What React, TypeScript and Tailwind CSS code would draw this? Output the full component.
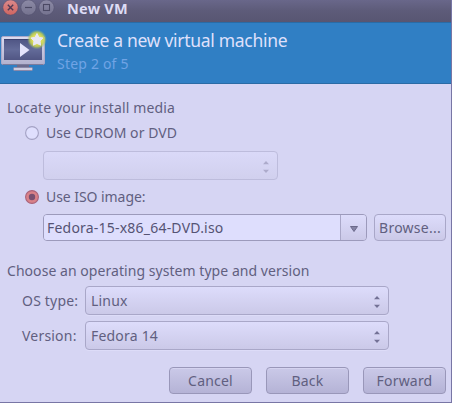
import React from "react";

function Monitor() {
  return (
    <svg width="50" height="46" viewBox="0 0 50 46" className="block shrink-0">
      <defs>
        <radialGradient id="glow">
          <stop offset="0.45" stopColor="#e0e05a" />
          <stop offset="0.72" stopColor="#c3d052" stopOpacity="0.85" />
          <stop offset="1" stopColor="#7fae80" stopOpacity="0" />
        </radialGradient>
        <linearGradient id="screen" x1="0" y1="0" x2="0" y2="1">
          <stop offset="0" stopColor="#4f5584" />
          <stop offset="0.5" stopColor="#636b99" />
          <stop offset="1" stopColor="#515684" />
        </linearGradient>
        <linearGradient id="frame" x1="0" y1="0" x2="0" y2="1">
          <stop offset="0" stopColor="#dcdcf0" />
          <stop offset="1" stopColor="#b2b1ce" />
        </linearGradient>
      </defs>
      <path d="M17 36h12v4H17z" fill="#6c6b8c" />
      <rect x="13.5" y="39.5" width="19" height="3" rx="1" fill="#cdccdf" stroke="#8988a9" />
      <rect x="1.5" y="8.500" width="43" height="28" rx="1.5" fill="url(#frame)" stroke="#aaa9ca" />
      <path d="M2.500 36.500h41" stroke="#7c7b9c" />
      <rect x="4" y="11" width="38" height="21" fill="url(#screen)" />
      <path d="M4 11.500h38" stroke="#3c4270" />
      <path d="M20 15v14l9.500-7z" fill="#e4e3fb" />
      <circle cx="37" cy="11.500" r="10" fill="url(#glow)" />
      <path d="M37 5.500l1.900 3.800 4.100.7-3 3 .6 4.200-3.600-1.900-3.600 1.900.6-4.200-3-3 4.100-.7z" fill="#e9e8f4" stroke="#e9e8f4" strokeLinejoin="round" />
    </svg>
  );
}

function TitleBar() {
  return (
    <div className="flex h-[22px] shrink-0 items-start bg-linear-to-b from-[#69678a] via-[#5d5b79] to-[#585672]">
      <svg width="60" height="17" viewBox="0 0 60 17" className="block shrink-0">
        <defs>
          <linearGradient id="close" x1="0" y1="0" x2="0" y2="1">
            <stop offset="0" stopColor="#dc8a8c" />
            <stop offset="1" stopColor="#cf6560" />
          </linearGradient>
          <linearGradient id="plain" x1="0" y1="0" x2="0" y2="1">
            <stop offset="0" stopColor="#8c8aa6" />
            <stop offset="1" stopColor="#75738f" />
          </linearGradient>
        </defs>
        <circle cx="10.500" cy="7.500" r="7.600" fill="url(#close)" stroke="#5a4a68" strokeWidth="0.500" />
        <circle cx="28.500" cy="7.500" r="7.600" fill="url(#plain)" stroke="#514f6c" strokeWidth="0.500" />
        <circle cx="46.500" cy="7.500" r="7.600" fill="url(#plain)" stroke="#514f6c" strokeWidth="0.500" />
        <path d="M7.800 4.800l5.400 5.400M13.200 4.800l-5.400 5.400" stroke="#513b55" strokeWidth="1.400" />
        <path d="M25 7.500h7" stroke="#4b4964" strokeWidth="1.200" />
        <rect x="43.500" y="4.500" width="6" height="6" fill="none" stroke="#4b4964" strokeWidth="1.100" />
      </svg>
      <div className="ml-[7px] h-4 text-[14.500px] leading-4 font-bold tracking-[0.250px] text-[#dedcf5]">New VM</div>
    </div>
  );
}

function Radio({ on }: { on?: boolean }) {
  return (
    <svg width="14" height="14" viewBox="0 0 14 14" className="block shrink-0">
      <circle cx="7" cy="7" r="6.400" fill={on ? "#d98188" : "#dfdffd"} stroke={on ? "#a96279" : "#a3a1c3"} strokeWidth="1.100" />
      {on && <circle cx="7" cy="7" r="3.200" fill="#785070" />}
    </svg>
  );
}

function Arrows({ faint }: { faint?: boolean }) {
  return (
    <svg width="6" height="12" viewBox="0 0 6 12" className={faint ? "mt-0.5 block text-[#adabcb]" : "mt-0.5 block text-[#737195]"}>
      <path d="M0 3.300L3 0l3 3.300zM0 8.700L3 12l3-3.300z" fill="currentColor" />
    </svg>
  );
}

function Select({ value }: { value: string }) {
  return (
    <div className="flex h-[29px] w-[304px] items-center justify-between rounded-[4px] border border-[#a9a7c8] bg-linear-to-b from-[#dddcfb] to-[#cbc9e8] pr-2 pl-[5px] shadow-[0_1px_0_#dddcf8]">
      <span className="tracking-[0.200px]">{value}</span>
      <Arrows />
    </div>
  );
}

function Button({ children }: { children: string }) {
  return (
    <button className="h-[27px] w-[83px] rounded-[4px] border border-[#9997b9] bg-linear-to-b from-[#cac9e8] to-[#b5b3d6] text-center leading-[25px] tracking-[0.200px] shadow-[inset_0_1px_0_#d5d3f0]">
      {children}
    </button>
  );
}

export default function App() {
  return (
    <div className="flex h-[403px] w-[452px] flex-col overflow-hidden border-r border-b border-[#7876a5] bg-[#d6d5f3] font-['Noto_Sans',sans-serif] text-[14px] leading-5 whitespace-nowrap text-[#615f80]">
      <TitleBar />
      <header className="flex h-[62px] shrink-0 border-t border-b border-[#2a6ba5] bg-[#307fc4] pt-[5px]">
        <Monitor />
        <div className="ml-[7px]">
          <h1 className="h-6 text-[17.500px] leading-6 tracking-[-0.300px] text-[#dfe0fb]">Create a new virtual machine</h1>
          <p className="h-6 text-[14px] leading-6 tracking-[0.200px] text-[#70a4e5]">Step 2 of 5</p>
        </div>
      </header>
      <main className="flex flex-col">
        <div className="mt-[14px] ml-[7px] h-5 tracking-[0.140px]">Locate your install media</div>
        <label className="mt-[5px] ml-[25px] flex h-5 items-center gap-[7px]">
          <Radio />
          <span className="tracking-[0.060px]">Use CDROM or DVD</span>
        </label>
        <div className="mt-2 ml-[43px] flex h-[29px] w-[235px] items-center justify-end rounded-[4px] border border-[#bdbcdc] bg-linear-to-b from-[#dad9f8] to-[#d1d0ee] pr-2">
          <Arrows faint />
        </div>
        <label className="mt-[7px] ml-[25px] flex h-5 items-center gap-[7px]">
          <Radio on />
          <span className="tracking-[-0.060px]">Use ISO image:</span>
        </label>
        <div className="mt-[7px] ml-[43px] flex h-[27px] gap-[7px]">
          <div className="flex w-[324px] overflow-hidden rounded-[4px] border border-[#9c9abb]">
            <div className="w-[296px] bg-[#dedefd] pl-[3px] leading-[25px] tracking-[0.210px] text-[#555374]">Fedora-15-x86_64-DVD.iso</div>
            <div className="flex flex-1 items-center justify-center border-l border-[#a9a7c8] bg-linear-to-b from-[#dddcfb] to-[#cbc9e8]">
              <svg width="8" height="6" viewBox="0 0 8 6" className="mt-0.5 block">
                <path d="M.5.5h7L4 5.500z" fill="#8583a5" stroke="#6b698a" />
              </svg>
            </div>
          </div>
          <button className="w-[72px] rounded-[4px] border border-[#a9a7c8] bg-linear-to-b from-[#dddcfb] to-[#cbc9e8] leading-[25px] tracking-[0.250px]">Browse...</button>
        </div>
        <div className="mt-5 ml-[7px] h-5 tracking-[0.050px]">Choose an operating system type and version</div>
        <div className="mt-[5px] flex items-center">
          <span className="ml-[22px] w-[63px] tracking-[0.200px]">OS type:</span>
          <Select value="Linux" />
        </div>
        <div className="mt-[6px] flex items-center">
          <span className="ml-[22px] w-[63px] tracking-[0.200px]">Version:</span>
          <Select value="Fedora 14" />
        </div>
        <div className="mt-[17px] mr-[5px] flex justify-end gap-[14px]">
          <Button>Cancel</Button>
          <Button>Back</Button>
          <Button>Forward</Button>
        </div>
      </main>
    </div>
  );
}
